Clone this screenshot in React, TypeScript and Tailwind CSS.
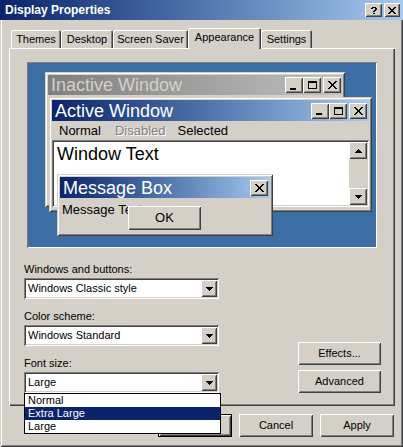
import React from 'react';

// classic 3D edges, drawn with inset shadows so children keep their coordinates
const raised = 'shadow-[inset_1px_1px_0_#ffffff,inset_-1px_-1px_0_#404040,inset_2px_2px_0_#d4d0c8,inset_-2px_-2px_0_#808080]';
const frame = 'shadow-[inset_1px_1px_0_#d4d0c8,inset_-1px_-1px_0_#404040,inset_2px_2px_0_#ffffff,inset_-2px_-2px_0_#808080]';
const sunken = 'shadow-[inset_1px_1px_0_#808080,inset_-1px_-1px_0_#ffffff,inset_2px_2px_0_#404040,inset_-2px_-2px_0_#d4d0c8]';

const Q = ['.####.', '##..##', '....##', '...##.', '..##..', '......', '..##..'];
const X8 = ['##....##', '.##..##.', '..####..', '...##...', '..####..', '.##..##.', '##....##'];
const X9 = ['##.....##', '.##...##.', '..##.##..', '...###...', '...###...', '..##.##..', '.##...##.', '##.....##'];
const MAX = ['#########', '#########', '#.......#', '#.......#', '#.......#', '#.......#', '#.......#', '#########'];
const MIN = ['######', '######'];
const DOWN = ['#######', '.#####.', '..###..', '...#...'];
const UP = ['...#...', '..###..', '.#####.', '#######'];

const Px: React.FC<{ rows: string[]; color?: string }> = ({ rows, color = '#000' }) => (
  <svg width={rows[0].length} height={rows.length} shapeRendering="crispEdges" className="block">
    {rows.flatMap((r, y) =>
      r.split('').map((c, x) => (c === '#' ? <rect key={`${x}-${y}`} x={x} y={y} width={1} height={1} fill={color} /> : null))
    )}
  </svg>
);

const CapBtn: React.FC<{ children: React.ReactNode; className?: string }> = ({ children, className = '' }) => (
  <div className={`w-[18px] h-[16px] bg-[#d4d0c8] flex items-center justify-center ${raised} ${className}`}>{children}</div>
);

const CaptionButtons: React.FC = () => (
  <div className="flex items-center">
    <CapBtn><div className="pt-[7px] pr-[3px]"><Px rows={MIN} /></div></CapBtn>
    <CapBtn><Px rows={MAX} /></CapBtn>
    <CapBtn className="ml-[2px]"><Px rows={X9} /></CapBtn>
  </div>
);

const Select: React.FC<{ value: string }> = ({ value }) => (
  <div className={`w-[195px] h-[21px] bg-white flex p-[2px] ${sunken}`}>
    <div className="flex-1 pl-[2px] text-[11px] leading-[17px]">{value}</div>
    <div className={`w-[16px] bg-[#d4d0c8] flex items-center justify-center ${raised}`}>
      <Px rows={DOWN} />
    </div>
  </div>
);

const Btn: React.FC<{ children: React.ReactNode; className?: string }> = ({ children, className = '' }) => (
  <div className={`h-[23px] bg-[#d4d0c8] flex items-center justify-center text-[11px] ${raised} ${className}`}>{children}</div>
);

const tabs = [
  { label: 'Themes', w: 'w-[50px]' },
  { label: 'Desktop', w: 'w-[52px]' },
  { label: 'Screen Saver', w: 'w-[75px]' },
  { label: 'Appearance', w: 'w-[73px]', active: true },
  { label: 'Settings', w: 'w-[51px]' },
];

export default function App() {
  return (
    <div className={`w-[403px] h-[447px] bg-[#d4d0c8] flex flex-col overflow-hidden text-black font-['Liberation_Sans',Arial,sans-serif] ${frame}`}>
      {/* title bar */}
      <div className="h-[20px] flex items-center justify-between pl-[5px] pr-[3px] bg-linear-to-r from-[#0a246a] to-[#a6caf0]">
        <span className="text-white font-bold text-[12px] leading-none">Display Properties</span>
        <div className="flex gap-[2px]">
          <div className={`w-[17px] h-[14px] bg-[#d4d0c8] flex items-center justify-center ${raised}`}><Px rows={Q} /></div>
          <div className={`w-[16px] h-[14px] bg-[#d4d0c8] flex items-center justify-center ${raised}`}><Px rows={X8} /></div>
        </div>
      </div>

      {/* tabs */}
      <div className="h-[28px] flex items-end pl-[11px]">
        {tabs.map(t => (
          <div
            key={t.label}
            className={`${t.w} flex items-center justify-center text-[11px] rounded-t-[2px] bg-[#d4d0c8] shadow-[inset_1px_1px_0_#ffffff,inset_-1px_0_0_#404040,inset_-2px_0_0_#808080] ${t.active ? 'h-[21px] -mb-px relative z-10 pb-[2px]' : 'h-[18px] pt-px'}`}
          >
            {t.label}
          </div>
        ))}
      </div>

      {/* tab page */}
      <div className="ml-[9px] w-[386px] h-[358px] flex flex-col pt-[14px] shadow-[inset_1px_1px_0_#ffffff,inset_-1px_-1px_0_#404040,inset_-2px_-2px_0_#808080]">
        {/* preview */}
        <div className="relative ml-[18px] w-[350px] h-[186px] bg-[#3a6ea5] shadow-[inset_1px_1px_0_#808080,inset_-1px_-1px_0_#ffffff]">
          <div className={`absolute left-[18px] top-[10px] w-[300px] h-[135px] bg-[#d4d0c8] p-[3px] ${frame}`}>
            <div className="h-[20px] flex items-center justify-between pl-[3px] pr-[1px] bg-linear-to-r from-[#808080] to-[#c0c0c0]">
              <span className="text-[18px] leading-none text-[#d4d0c8]">Inactive Window</span>
              <CaptionButtons />
            </div>
          </div>

          <div className={`absolute left-[22px] top-[35px] w-[323px] h-[115px] bg-[#d4d0c8] p-[3px] flex flex-col ${frame}`}>
            <div className="h-[21px] shrink-0 flex items-center justify-between pl-[3px] pr-[2px] bg-linear-to-r from-[#0a246a] to-[#a6caf0]">
              <span className="text-[18px] leading-none text-white">Active Window</span>
              <CaptionButtons />
            </div>
            <div className="h-[19px] shrink-0 flex items-center text-[13px] leading-none">
              <span className="ml-[7px]">Normal</span>
              <span className="ml-[14px] text-[#808080] [text-shadow:1px_1px_0_#ffffff]">Disabled</span>
              <span className="ml-[12px]">Selected</span>
            </div>
            <div className={`h-[67px] bg-white flex p-[2px] ${sunken}`}>
              <div className="flex-1 pl-[3px] pt-[3px] text-[18px] leading-none">Window Text</div>
              <div className="w-[18px] flex flex-col bg-[#d4d0c8]">
                <div className={`h-[17px] flex items-center justify-center bg-[#d4d0c8] ${raised}`}><Px rows={UP} /></div>
                <div className="flex-1" />
                <div className={`h-[17px] flex items-center justify-center bg-[#d4d0c8] ${raised}`}><Px rows={DOWN} /></div>
              </div>
            </div>
          </div>

          <div className={`absolute left-[30px] top-[112px] w-[216px] h-[62px] bg-[#d4d0c8] p-[3px] ${frame}`}>
            <div className="h-[21px] flex items-center justify-between pl-[3px] pr-[2px] bg-linear-to-r from-[#0a246a] to-[#a6caf0]">
              <span className="text-[18px] leading-none text-white">Message Box</span>
              <CapBtn><Px rows={X9} /></CapBtn>
            </div>
            <div className="pl-[2px] pt-[4px] text-[13px] leading-[15px]">Message Text</div>
            <div className={`absolute left-[71px] top-[32px] w-[73px] h-[24px] flex items-center justify-center bg-[#d4d0c8] text-[13px] ${raised}`}>OK</div>
          </div>
        </div>

        {/* settings */}
        <div className="flex justify-between items-end mt-[15px] pl-[15px] pr-[14px]">
          <div className="flex flex-col w-[197px] text-[11px] leading-[13px]">
            <div className="mb-[2px]">Windows and buttons:</div>
            <Select value="Windows Classic style" />
            <div className="mt-[11px] mb-[2px]">Color scheme:</div>
            <Select value="Windows Standard" />
            <div className="mt-[11px] mb-[2px]">Font size:</div>
            <div className="relative">
              <Select value="Large" />
              <div className="absolute left-0 top-[21px] w-[197px] border border-black bg-white z-20">
                <div className="h-[13px] pl-[3px] leading-[13px]">Normal</div>
                <div className="h-[13px] pl-[3px] leading-[13px] bg-[#0a246a] text-white">Extra Large</div>
                <div className="h-[13px] pl-[3px] leading-[13px]">Large</div>
              </div>
            </div>
          </div>
          <div className="flex flex-col gap-[5px] w-[83px]">
            <Btn>Effects...</Btn>
            <Btn>Advanced</Btn>
          </div>
        </div>
      </div>

      {/* dialog buttons */}
      <div className="mt-[8px] flex justify-end gap-[7px] pr-[9px]">
        <div className="w-[74px] h-[23px] border border-black">
          <Btn className="h-full">OK</Btn>
        </div>
        <Btn className="w-[74px]">Cancel</Btn>
        <Btn className="w-[74px]">Apply</Btn>
      </div>
    </div>
  );
}
